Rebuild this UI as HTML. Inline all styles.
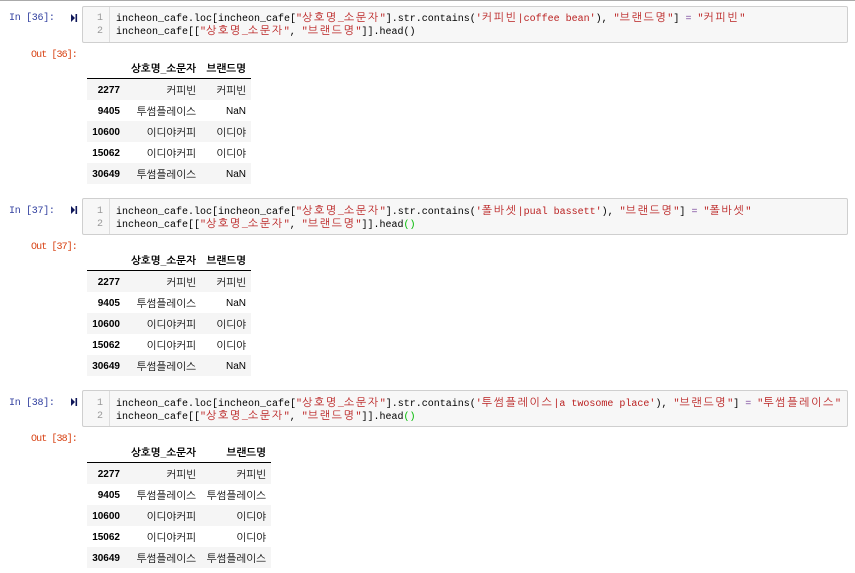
<!DOCTYPE html>
<html><head><meta charset="utf-8"><style>
html,body{margin:0;padding:0;background:#fff;width:855px;height:573px;overflow:hidden}
#top{position:absolute;left:0;top:0;width:855px;height:1px;background:#aaa}
.box{position:absolute;left:82px;width:764px;height:35px;background:#f7f7f7;border:1px solid #cfcfcf;border-radius:2px}
.div{position:absolute;left:109px;width:1px;height:35px;background:#ddd}
.m,.p,.o,.n{position:absolute;font:10px/13px "Liberation Mono","NanumGothic",monospace;white-space:pre}
.m{left:116px;color:#000}
.p{left:9px;color:#303f9f;letter-spacing:-.3px}
.o{left:31px;color:#d84315;letter-spacing:-.9px}
.n{left:96px;color:#999;width:7px;text-align:right}
.k{font-family:"NanumGothic","Liberation Mono",monospace;font-size:11px;letter-spacing:1.6px}
.s{color:#ba2121}.e{color:#8050a0}.g{color:#0b0}
svg{position:absolute}
table{position:absolute;left:87px;border-collapse:separate;border-spacing:0;table-layout:fixed;font:10px "Liberation Sans","NanumGothic",sans-serif;color:#000}
td,th{padding:2px 5px 0;height:21px;text-align:right;white-space:nowrap;box-sizing:border-box}
thead th{height:21px;border-bottom:1px solid #000;vertical-align:middle;font-size:10.5px;padding-top:2px}
tbody td{font-size:10.5px}
tbody td.l{font-size:10px}
tbody th{font-weight:bold}
tbody tr:nth-child(odd){background:#f5f5f5}
</style></head><body>
<div id="top"></div>

<div class="box" style="top:6px"></div><div class="div" style="top:7px"></div>
<svg style="left:71px;top:14px" width="7" height="8"><path d="M0 0L4 4L0 8Z" fill="#10185a"/><rect x="4.5" y="0" width="1.6" height="8" fill="#10185a"/></svg>
<div class="p" style="top:12px">In [36]:</div>
<div class="n" style="top:12px">1</div><div class="n" style="top:25px">2</div>
<div class="m" style="top:11px">incheon_cafe.loc[incheon_cafe[<span class="s">"<span class="k">상호명</span>_<span class="k">소문자</span>"</span>].str.contains(<span class="s">'<span class="k">커피빈</span>|coffee bean'</span>), <span class="s">"<span class="k">브랜드명</span>"</span>] <span class="e">=</span> <span class="s">"<span class="k">커피빈</span>"</span></div>
<div class="m" style="top:24px">incheon_cafe[[<span class="s">"<span class="k">상호명</span>_<span class="k">소문자</span>"</span>, <span class="s">"<span class="k">브랜드명</span>"</span>]].head()</div>
<div class="o" style="top:49px">Out [36]:</div>
<table style="top:58px;width:164px"><colgroup><col style="width:38px"><col style="width:76px"><col style="width:50px"></colgroup>
<thead><tr><th></th><th>상호명_소문자</th><th>브랜드명</th></tr></thead>
<tbody>
<tr><th>2277</th><td>커피빈</td><td>커피빈</td></tr>
<tr><th>9405</th><td>투썸플레이스</td><td class="l">NaN</td></tr>
<tr><th>10600</th><td>이디야커피</td><td>이디야</td></tr>
<tr><th>15062</th><td>이디야커피</td><td>이디야</td></tr>
<tr><th>30649</th><td>투썸플레이스</td><td class="l">NaN</td></tr>
</tbody></table>

<div class="box" style="top:198px"></div><div class="div" style="top:199px"></div>
<svg style="left:71px;top:206px" width="7" height="8"><path d="M0 0L4 4L0 8Z" fill="#10185a"/><rect x="4.5" y="0" width="1.6" height="8" fill="#10185a"/></svg>
<div class="p" style="top:205px">In [37]:</div>
<div class="n" style="top:205px">1</div><div class="n" style="top:218px">2</div>
<div class="m" style="top:204px">incheon_cafe.loc[incheon_cafe[<span class="s">"<span class="k">상호명</span>_<span class="k">소문자</span>"</span>].str.contains(<span class="s">'<span class="k">폴바셋</span>|pual bassett'</span>), <span class="s">"<span class="k">브랜드명</span>"</span>] <span class="e">=</span> <span class="s">"<span class="k">폴바셋</span>"</span></div>
<div class="m" style="top:217px">incheon_cafe[[<span class="s">"<span class="k">상호명</span>_<span class="k">소문자</span>"</span>, <span class="s">"<span class="k">브랜드명</span>"</span>]].head<span class="g">()</span></div>
<div class="o" style="top:241px">Out [37]:</div>
<table style="top:250px;width:164px"><colgroup><col style="width:38px"><col style="width:76px"><col style="width:50px"></colgroup>
<thead><tr><th></th><th>상호명_소문자</th><th>브랜드명</th></tr></thead>
<tbody>
<tr><th>2277</th><td>커피빈</td><td>커피빈</td></tr>
<tr><th>9405</th><td>투썸플레이스</td><td class="l">NaN</td></tr>
<tr><th>10600</th><td>이디야커피</td><td>이디야</td></tr>
<tr><th>15062</th><td>이디야커피</td><td>이디야</td></tr>
<tr><th>30649</th><td>투썸플레이스</td><td class="l">NaN</td></tr>
</tbody></table>

<div class="box" style="top:390px"></div><div class="div" style="top:391px"></div>
<svg style="left:71px;top:398px" width="7" height="8"><path d="M0 0L4 4L0 8Z" fill="#10185a"/><rect x="4.5" y="0" width="1.6" height="8" fill="#10185a"/></svg>
<div class="p" style="top:397px">In [38]:</div>
<div class="n" style="top:397px">1</div><div class="n" style="top:410px">2</div>
<div class="m" style="top:396px">incheon_cafe.loc[incheon_cafe[<span class="s">"<span class="k">상호명</span>_<span class="k">소문자</span>"</span>].str.contains(<span class="s">'<span class="k">투썸플레이스</span>|a twosome place'</span>), <span class="s">"<span class="k">브랜드명</span>"</span>] <span class="e">=</span> <span class="s">"<span class="k">투썸플레이스</span>"</span></div>
<div class="m" style="top:409px">incheon_cafe[[<span class="s">"<span class="k">상호명</span>_<span class="k">소문자</span>"</span>, <span class="s">"<span class="k">브랜드명</span>"</span>]].head<span class="g">()</span></div>
<div class="o" style="top:433px">Out [38]:</div>
<table style="top:442px;width:184px"><colgroup><col style="width:38px"><col style="width:76px"><col style="width:70px"></colgroup>
<thead><tr><th></th><th>상호명_소문자</th><th>브랜드명</th></tr></thead>
<tbody>
<tr><th>2277</th><td>커피빈</td><td>커피빈</td></tr>
<tr><th>9405</th><td>투썸플레이스</td><td>투썸플레이스</td></tr>
<tr><th>10600</th><td>이디야커피</td><td>이디야</td></tr>
<tr><th>15062</th><td>이디야커피</td><td>이디야</td></tr>
<tr><th>30649</th><td>투썸플레이스</td><td>투썸플레이스</td></tr>
</tbody></table>
</body></html>
